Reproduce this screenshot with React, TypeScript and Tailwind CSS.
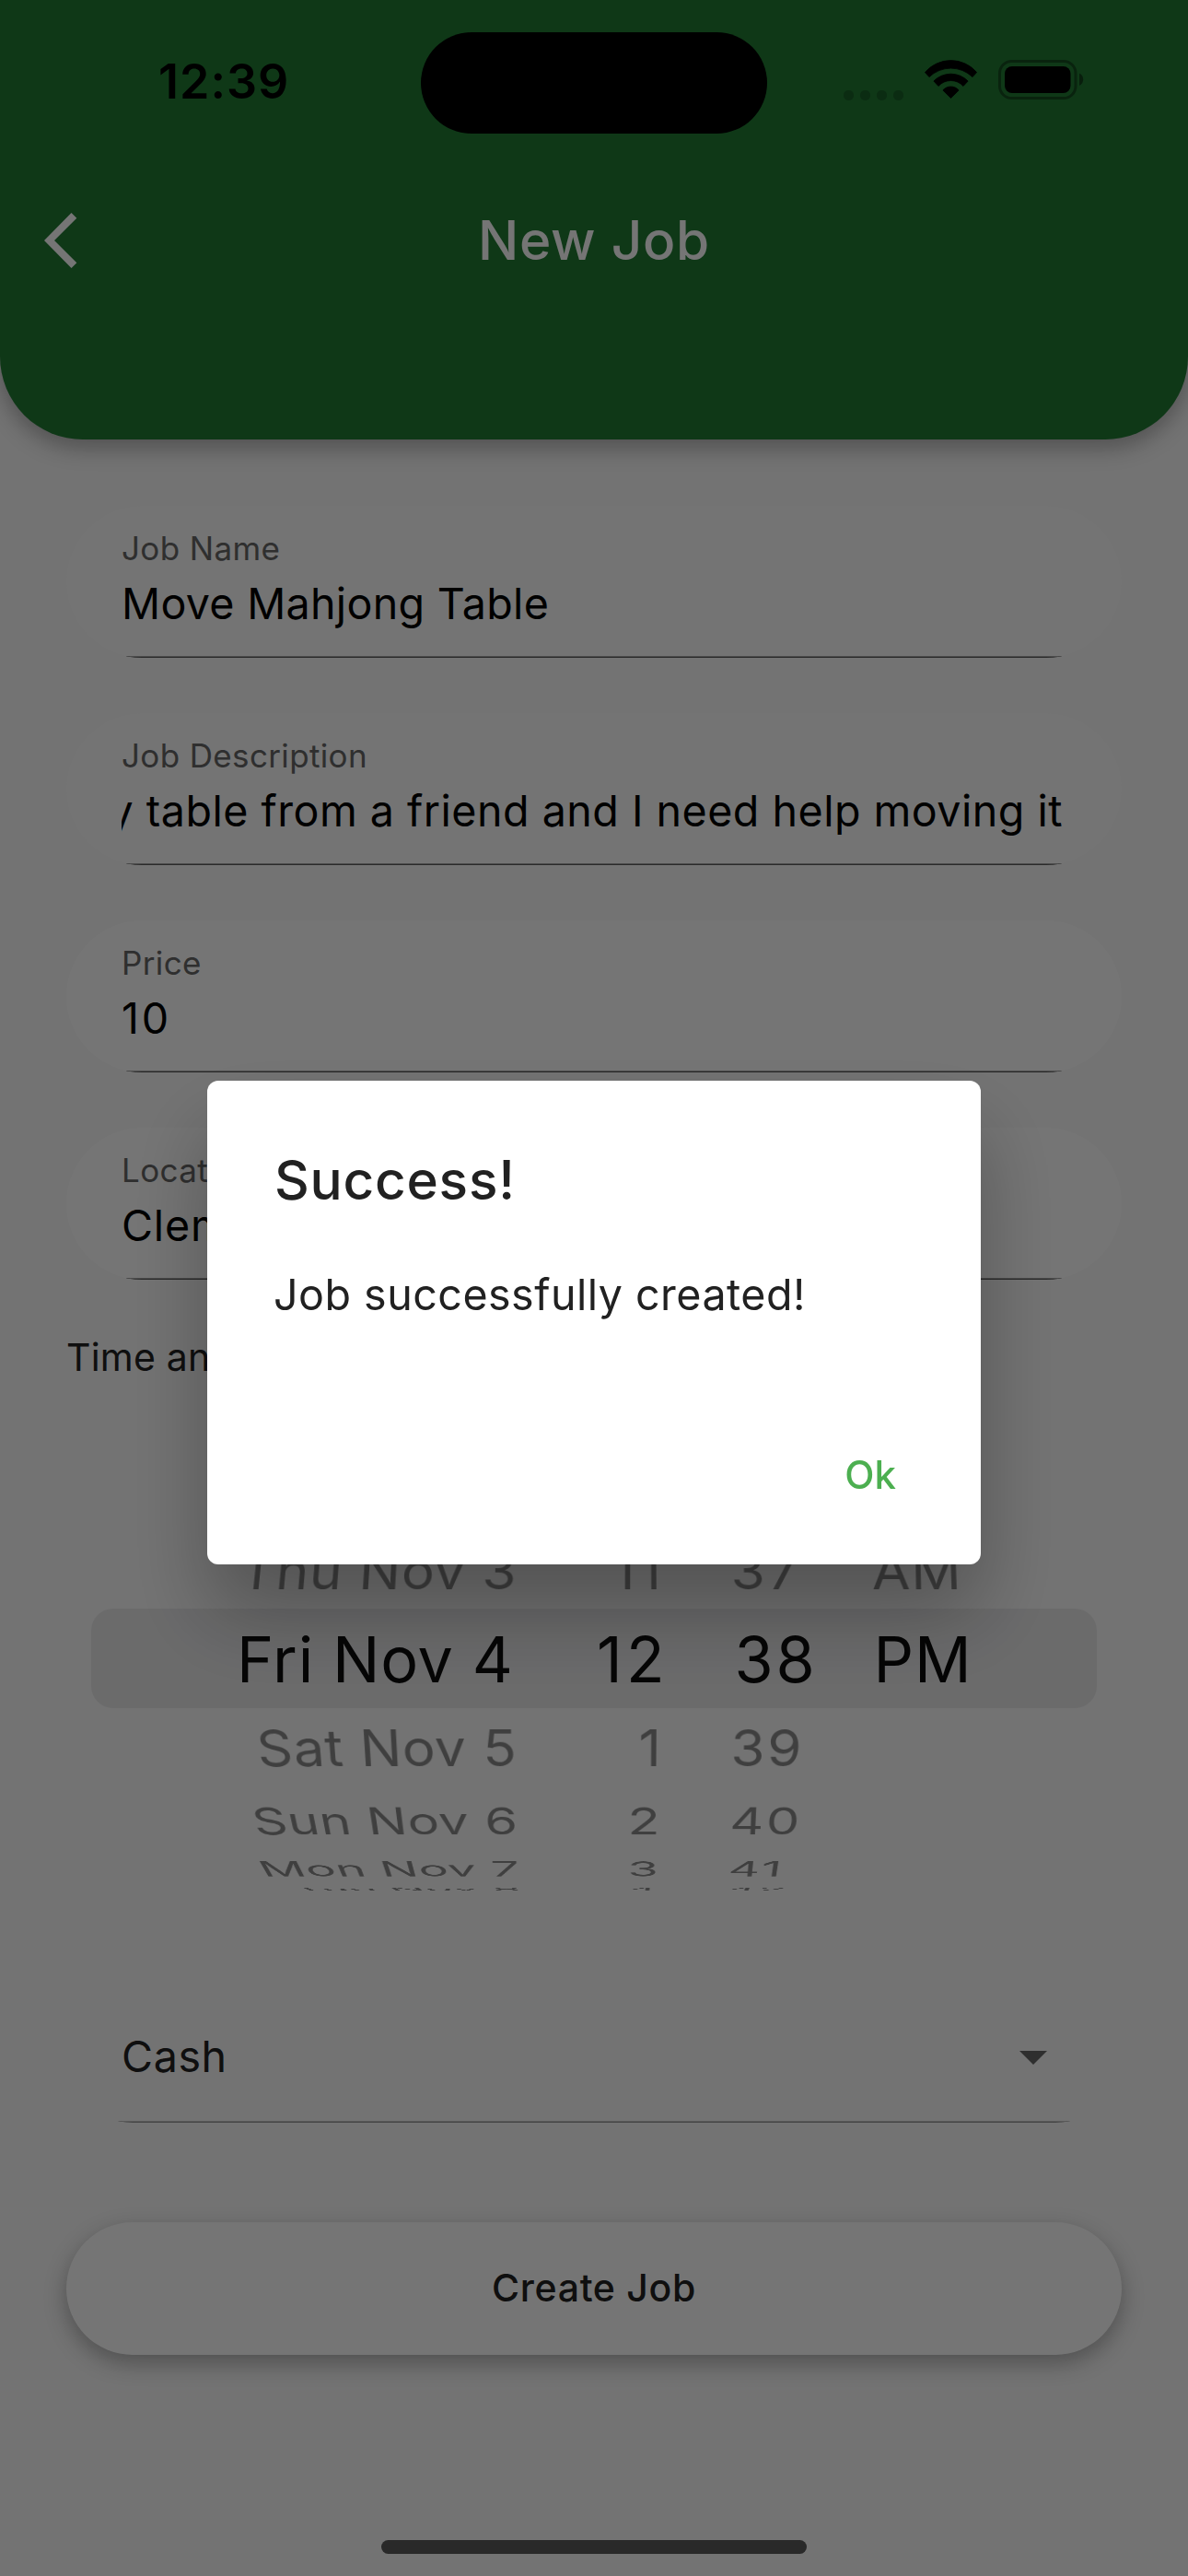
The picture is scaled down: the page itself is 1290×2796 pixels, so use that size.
import React from "react";

type Field = { label: string; value: string; tone: string; spacing: string; scrolled?: boolean };

const fields: Field[] = [
  { label: "Job Name", value: "Move Mahjong Table", tone: "bg-[#fcfcfc]", spacing: "tracking-[0.3px]" },
  {
    label: "Job Description",
    value: "y table from a friend and I need help moving it",
    tone: "bg-[#fcfcfc]",
    spacing: "tracking-[0.49px]",
    scrolled: true,
  },
  { label: "Price", value: "10", tone: "bg-white", spacing: "tracking-[2.8px]" },
  { label: "Location", value: "Clemson", tone: "bg-white", spacing: "tracking-[0.8px]" },
];

// Geometry of the rotating picker wheel.
const STEP = 0.309;
const RADIUS = 321;
const DISTANCE = 1000;
const MAGNIFY = 1.119;

function wheelTransform(offset: number) {
  if (offset === 0) return `scale(${MAGNIFY})`;
  return `perspective(${DISTANCE}px) translateZ(-${RADIUS}px) rotateX(${-offset * STEP}rad) translateZ(${RADIUS}px)`;
}

type Column = { items: [number, string][]; box: string; spacing: string; originX: number };

const columns: Column[] = [
  {
    items: [[-1, "Thu Nov 3"], [0, "Fri Nov 4"], [1, "Sat Nov 5"], [2, "Sun Nov 6"], [3, "Mon Nov 7"], [4, "Tue Nov 8"]],
    box: "w-[321px] text-right",
    spacing: "tracking-[0.7px]",
    originX: 350,
  },
  {
    items: [[-1, "11"], [0, "12"], [1, "1"], [2, "2"], [3, "3"], [4, "4"]],
    box: "w-[161px] text-right",
    spacing: "tracking-[3.8px]",
    originX: 129,
  },
  {
    items: [[-1, "37"], [0, "38"], [1, "39"], [2, "40"], [3, "41"], [4, "42"]],
    box: "w-[213px] pl-[72px]",
    spacing: "tracking-[2.5px]",
    originX: 42,
  },
  {
    items: [[-1, "AM"], [0, "PM"]],
    box: "w-[160px] pl-[12px]",
    spacing: "tracking-[0.8px]",
    originX: 0,
  },
];

function StatusBar() {
  return (
    <div className="flex h-[177px] items-center">
      <div className="w-[457px] pl-[172px] text-[52px] leading-none font-semibold tracking-[1px] text-black">12:39</div>
      <div className="mt-[2px] h-[110px] w-[376px] rounded-full bg-black" />
      <div className="flex items-center pl-[83px]">
        <div className="flex gap-[7px] pt-[30px]">
          {[0, 1, 2, 3].map((i) => (
            <span key={i} className="size-[11px] rounded-[5px] bg-black/22" />
          ))}
        </div>
        <svg className="mb-[5px] ml-[23px]" width="57" height="42" viewBox="0 0 57 42" fill="#000" stroke="#000" strokeWidth="0.8" strokeLinejoin="round">
          <path d="M0.4 13.5A37 37 0 0 1 56.6 13.5L52 18.6A33.8 33.8 0 0 0 5 18.6Z" />
          <path d="M9.9 23A26 26 0 0 1 47.1 23L42 28.5A18.2 18.2 0 0 0 15 28.5Z" />
          <path d="M19.9 33A11.2 11.2 0 0 1 37.1 33L28.5 41.5Z" />
        </svg>
        <svg className="mb-[4px] ml-[23px]" width="95" height="43" viewBox="0 0 95 43">
          <rect x="1.5" y="1.5" width="82.5" height="40" rx="13" fill="none" stroke="#000" strokeOpacity="0.38" strokeWidth="3" />
          <rect x="7" y="7" width="71.5" height="29" rx="8" fill="#000" />
          <path d="M88 14.500A7.500 7.500 0 0 1 88 28Z" fill="#000" fillOpacity="0.45" />
        </svg>
      </div>
    </div>
  );
}

function Header() {
  return (
    <header className="h-[477px] rounded-b-[90px] bg-[#217b34] shadow-[0_9px_24px_rgba(0,0,0,0.3)]">
      <StatusBar />
      <div className="grid h-[168px] grid-cols-[1fr_auto_1fr] items-center">
        <svg className="ml-[48px]" width="36" height="60" viewBox="0 0 36 60">
          <path d="M29.500 0L35.300 5.700L11 30L35.300 54.300L29.500 60L0 30Z" fill="#fff" />
        </svg>
        <h1 className="text-[58.5px] leading-none font-medium tracking-[0.73px] text-white">New Job</h1>
      </div>
    </header>
  );
}

function TextField({ field }: { field: Field }) {
  return (
    <div className={`flex h-[165px] flex-col overflow-hidden rounded-full pt-[25px] ${field.tone}`}>
      <div className="px-[60px] text-[35px] leading-[42px] tracking-[0.36px] text-[#666]">{field.label}</div>
      <div
        className={`mr-[64px] ml-[60px] mt-[11px] flex overflow-hidden text-[46.6px] leading-[56px] whitespace-nowrap text-black ${field.spacing} ${field.scrolled ? "justify-end" : ""}`}
      >
        {field.value}
      </div>
      <div className="mt-auto h-[2px] border-t border-[#a4a4a4] bg-[#5c5c5c]" />
    </div>
  );
}

function DatePicker() {
  return (
    <div className="mx-[27px] mt-[249px] flex h-[108px] items-center rounded-[24px] bg-[#e9e9ea] pl-[141px]">
      {columns.map((column, c) => (
        <div key={c} className="grid pt-[2px]">
          {column.items.map(([offset, text]) => (
            <div
              key={offset}
              className={`col-start-1 row-start-1 text-[61px] leading-[96px] whitespace-nowrap ${column.box} ${column.spacing} ${offset === 0 ? "text-[#0d0d0d]" : "text-black/45"}`}
              style={{ transform: wheelTransform(offset), transformOrigin: `${column.originX}px 50%` }}
            >
              {text}
            </div>
          ))}
        </div>
      ))}
    </div>
  );
}

function Dropdown() {
  return (
    <div className="mt-[306px] flex h-[144px] flex-col overflow-hidden rounded-[75px]">
      <div className="flex flex-1 items-center justify-between pr-[81px] pl-[60px] text-[46.6px] tracking-[0.6px] text-[#212121]">
        <span className="pt-[3px]">Cash</span>
        <svg className="mt-[4px]" width="30" height="15" viewBox="0 0 30 15">
          <path d="M0 0H30L15 15Z" fill="#666" />
        </svg>
      </div>
      <div className="h-[2px] shrink-0 border-t border-[#c0c0c0] bg-[#989898]" />
    </div>
  );
}

function SuccessDialog() {
  return (
    <div className="absolute top-[1173px] left-[225px] flex h-[525px] w-[840px] flex-col rounded-[12px] bg-white px-[72px] pt-[72px] text-[#212121] shadow-[0_54px_90px_rgba(0,0,0,0.28)]">
      <h2 className="pl-px text-[58.5px] leading-[72px] font-medium tracking-[0.75px]">Success!</h2>
      <p className="mt-[58px] text-[46.6px] leading-[60px] tracking-[0.48px]">Job successfully created!</p>
      <button className="mt-[139px] mr-[20px] self-end text-[42px] leading-[54px] font-medium text-[#4caf50]">Ok</button>
    </div>
  );
}

export default function App() {
  return (
    <div className="relative h-[2796px] w-[1290px] overflow-hidden bg-[#fafafa] font-['Inter',sans-serif]">
      <Header />
      <main className="px-[72px] pt-[72px]">
        <div className="flex flex-col gap-[60px]">
          {fields.map((field) => (
            <TextField key={field.label} field={field} />
          ))}
        </div>
        <div className="mt-[60px] text-[41px] leading-[48px] tracking-[0.2px] text-[#212121]">Time and Date:</div>
        <DatePicker />
        <Dropdown />
        <button className="mt-[108px] h-[144px] w-full rounded-full bg-white text-[41px] font-medium tracking-[0.68px] text-[#212121] shadow-[0_9px_24px_rgba(0,0,0,0.3)]">
          Create Job
        </button>
      </main>
      <div className="absolute inset-0 bg-black/54" />
      <SuccessDialog />
      <div className="absolute bottom-[24px] left-[414px] h-[15px] w-[462px] rounded-full bg-[#292929]" />
    </div>
  );
}
